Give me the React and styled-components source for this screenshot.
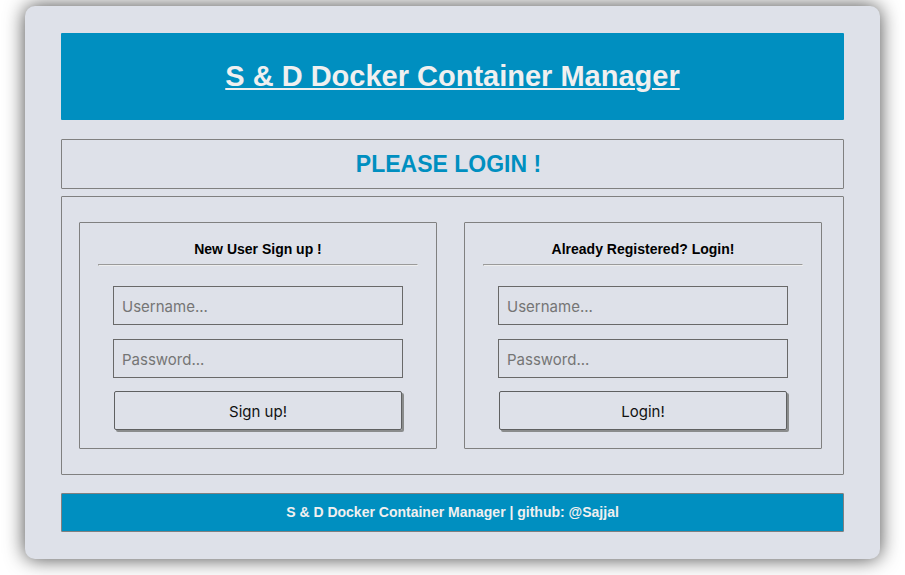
import React from "react";
import styled, { createGlobalStyle } from "styled-components";

const GlobalStyle = createGlobalStyle`
  * {
    box-sizing: border-box;
  }
  body {
    margin: 0;
    background: #fff;
    font-family: "Liberation Sans", Helvetica, Arial, sans-serif;
  }
`;

const Card = styled.div`
  display: flex;
  flex-direction: column;
  margin: 6px 25px 16px;
  padding: 27px 36px;
  background: #dee1e9;
  border-radius: 10px;
  box-shadow: 0 0 20px #484848;
`;

const Banner = styled.header`
  padding: 26px 16px 27px;
  background: #008fc0;
  border-radius: 1px;
  text-align: center;
`;

const Title = styled.h1`
  margin: 0;
  color: #f0f0f0;
  font-size: 29px;
  line-height: 34px;
  text-decoration: underline;
  text-decoration-thickness: 2px;
  text-underline-offset: 2px;
`;

const Notice = styled.div`
  margin-top: 19px;
  padding: 10px 24px 10px 16px;
  border: 1px solid #808080;
  border-radius: 1px;
  text-align: center;
`;

const NoticeText = styled.h2`
  margin: 0;
  color: #008fc0;
  font-size: 23px;
  line-height: 28px;
`;

const Main = styled.main`
  display: grid;
  grid-template-columns: repeat(auto-fit, minmax(280px, 1fr));
  gap: 27px;
  margin-top: 7px;
  padding: 25px 21px 25px 17px;
  border: 1px solid #808080;
  border-radius: 1px;
`;

const Panel = styled.form`
  display: flex;
  flex-direction: column;
  padding: 17px 18px 18px;
  border: 1px solid #808080;
  border-radius: 1px;
`;

const PanelTitle = styled.h3`
  margin: 0;
  color: #000;
  font-size: 14px;
  line-height: 18px;
  text-align: center;
`;

const Divider = styled.hr`
  width: 100%;
  height: 2px;
  margin: 6px 0 20px;
  border: 1px solid;
  border-color: #9a9a9a #eeeeee #eeeeee #9a9a9a;
`;

const Fields = styled.div`
  display: flex;
  flex-direction: column;
  gap: 14px;
  padding: 0 15px;
`;

const Field = styled.input`
  width: 100%;
  height: 39px;
  padding: 2px 8px 0;
  border: 1px solid #696969;
  border-radius: 0;
  background: transparent;
  color: #111;
  font-family: Inter, sans-serif;
  font-size: 15px;
  &::placeholder {
    color: #757575;
    opacity: 1;
  }
`;

const Submit = styled.button`
  height: 39px;
  margin: 13px 16px 0;
  padding: 2px 0 0;
  border: 1px solid #5f6061;
  border-radius: 2px;
  background: transparent;
  box-shadow: 2px 2px #8a8c8c;
  color: #111;
  font-family: Inter, sans-serif;
  font-size: 15px;
  cursor: pointer;
`;

const Footer = styled.footer`
  margin-top: 18px;
  padding: 9px 16px 10px;
  border: 1px solid #808080;
  border-radius: 1px;
  background: #008fc0;
  color: #f0f0f0;
  font-size: 14px;
  font-weight: bold;
  line-height: 18px;
  text-align: center;
`;

function AccountForm({ title, action }) {
  return (
    <Panel onSubmit={(event) => event.preventDefault()}>
      <PanelTitle>{title}</PanelTitle>
      <Divider />
      <Fields>
        <Field type="text" placeholder="Username..." aria-label="Username" />
        <Field type="password" placeholder="Password..." aria-label="Password" />
      </Fields>
      <Submit type="submit">{action}</Submit>
    </Panel>
  );
}

export default function App() {
  return (
    <>
      <GlobalStyle />
      <Card>
        <Banner>
          <Title>S &amp; D Docker Container Manager</Title>
        </Banner>
        <Notice>
          <NoticeText>PLEASE LOGIN !</NoticeText>
        </Notice>
        <Main>
          <AccountForm title="New User Sign up !" action="Sign up!" />
          <AccountForm title="Already Registered? Login!" action="Login!" />
        </Main>
        <Footer>S &amp; D Docker Container Manager | github: @Sajjal</Footer>
      </Card>
    </>
  );
}
